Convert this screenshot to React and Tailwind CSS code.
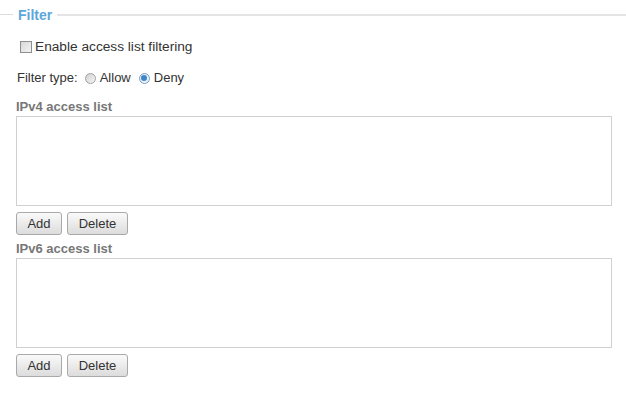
export default function App() {
  const Btn = ({ children, w }) => (
    <button
      className={`h-[23px] ${w} rounded-[3px] border border-[#a9a9a9] bg-gradient-to-b from-[#fafafa] to-[#dcdcdc] text-[13px] text-[#333] leading-none`}
    >
      {children}
    </button>
  );
  return (
    <div className="w-[626px] h-[398px] bg-white font-['Liberation_Sans',Arial,sans-serif] text-[13px] text-[#333]">
      <div className="flex items-center pt-[7px] h-[22px]">
        <div className="w-[13px] h-px bg-[#dcdcdc]" />
        <span className="px-[5px] text-[14px] font-bold text-[#5ea7dc] leading-[14px]">Filter</span>
        <div className="flex-1 h-[2px] bg-[#e4e4e4]" />
      </div>
      <div className="pl-[16px] pr-[15px]">
        <div className="flex items-center mt-[18px] h-[14px]">
          <span className="ml-[4px] w-[12px] h-[12px] border border-[#8f8f8f] bg-gradient-to-br from-[#d8d8d8] to-[#f4f4f4]" />
          <span className="ml-[3px] text-[13.7px]">Enable access list filtering</span>
        </div>
        <div className="flex items-center mt-[17px] h-[14px]">
          <span className="ml-[1px]">Filter type:</span>
          <span className="ml-[7px] w-[11px] h-[11px] rounded-full border border-[#a0a0a0] bg-gradient-to-br from-[#d0d0d0] to-[#f6f6f6]" />
          <span className="ml-[4px]">Allow</span>
          <span className="ml-[8px] w-[11px] h-[11px] rounded-full border border-[#7aa0c0] bg-[#e8f0f8] flex items-center justify-center">
            <span className="w-[6px] h-[6px] rounded-full bg-[#3f86c8]" />
          </span>
          <span className="ml-[4px]">Deny</span>
        </div>
        <div className="mt-[15px] font-bold text-[#777] leading-[14px]">IPv4 access list</div>
        <div className="mt-[2px] w-[596px] h-[90px] border border-[#d0d0d0] bg-white" />
        <div className="flex gap-[5px] mt-[6px]">
          <Btn w="w-[46px]">Add</Btn>
          <Btn w="w-[61px]">Delete</Btn>
        </div>
        <div className="mt-[7px] font-bold text-[#777] leading-[14px]">IPv6 access list</div>
        <div className="mt-[2px] w-[596px] h-[90px] border border-[#d0d0d0] bg-white" />
        <div className="flex gap-[5px] mt-[6px]">
          <Btn w="w-[46px]">Add</Btn>
          <Btn w="w-[61px]">Delete</Btn>
        </div>
      </div>
    </div>
  );
}
